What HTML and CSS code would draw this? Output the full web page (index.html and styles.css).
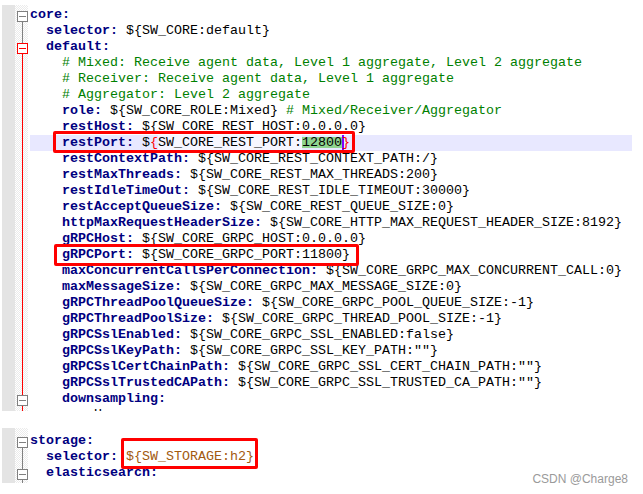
FILE: index.html
```html
<!DOCTYPE html>
<html lang="en">
<head>
  <meta charset="UTF-8">
  <meta name="viewport" content="width=device-width, initial-scale=1.0">
  <link rel="stylesheet" href="styles.css">
</head>
<body>

  <div class="editor top">
    <div class="margin"></div>
    <div class="folds">
      <span class="fold f-open"><i class="box"></i></span>
      <span class="fold f-g"></span>
      <span class="fold f-split"><i class="box red"></i></span>
      <span class="fold f-r"></span>
      <span class="fold f-r"></span>
      <span class="fold f-r"></span>
      <span class="fold f-r"></span>
      <span class="fold f-r"></span>
      <span class="fold f-r"></span>
      <span class="fold f-r"></span>
      <span class="fold f-r"></span>
      <span class="fold f-r"></span>
      <span class="fold f-r"></span>
      <span class="fold f-r"></span>
      <span class="fold f-r"></span>
      <span class="fold f-r"></span>
      <span class="fold f-r"></span>
      <span class="fold f-r"></span>
      <span class="fold f-r"></span>
      <span class="fold f-r"></span>
      <span class="fold f-r"></span>
      <span class="fold f-r"></span>
      <span class="fold f-r"></span>
      <span class="fold f-r"></span>
      <span class="fold f-r"><i class="box"></i></span>
      <span class="fold f-r"></span>
    </div>
    <div class="code">
<div class="ln"><span class="k">core:</span></div>
<div class="ln">  <span class="k">selector:</span> ${SW_CORE:default}</div>
<div class="ln">  <span class="k">default:</span></div>
<div class="ln">    <span class="c"># Mixed: Receive agent data, Level 1 aggregate, Level 2 aggregate</span></div>
<div class="ln">    <span class="c"># Receiver: Receive agent data, Level 1 aggregate</span></div>
<div class="ln">    <span class="c"># Aggregator: Level 2 aggregate</span></div>
<div class="ln">    <span class="k">role:</span> ${SW_CORE_ROLE:Mixed} <span class="c"># Mixed/Receiver/Aggregator</span></div>
<div class="ln">    <span class="k">restHost:</span> ${SW_CORE_REST_HOST:0.0.0.0}</div>
<div class="ln cur">    <span class="k">restPort:</span> $<span class="br">{</span><span class="match">SW_CORE_REST_PORT:</span><span class="sel">12800</span><span class="br caret">}</span></div>
<div class="ln">    <span class="k">restContextPath:</span> ${SW_CORE_REST_CONTEXT_PATH:/}</div>
<div class="ln">    <span class="k">restMaxThreads:</span> ${SW_CORE_REST_MAX_THREADS:200}</div>
<div class="ln">    <span class="k">restIdleTimeOut:</span> ${SW_CORE_REST_IDLE_TIMEOUT:30000}</div>
<div class="ln">    <span class="k">restAcceptQueueSize:</span> ${SW_CORE_REST_QUEUE_SIZE:0}</div>
<div class="ln">    <span class="k">httpMaxRequestHeaderSize:</span> ${SW_CORE_HTTP_MAX_REQUEST_HEADER_SIZE:8192}</div>
<div class="ln">    <span class="k">gRPCHost:</span> ${SW_CORE_GRPC_HOST:0.0.0.0}</div>
<div class="ln">    <span class="k">gRPCPort:</span> ${SW_CORE_GRPC_PORT:11800}</div>
<div class="ln">    <span class="k">maxConcurrentCallsPerConnection:</span> ${SW_CORE_GRPC_MAX_CONCURRENT_CALL:0}</div>
<div class="ln">    <span class="k">maxMessageSize:</span> ${SW_CORE_GRPC_MAX_MESSAGE_SIZE:0}</div>
<div class="ln">    <span class="k">gRPCThreadPoolQueueSize:</span> ${SW_CORE_GRPC_POOL_QUEUE_SIZE:-1}</div>
<div class="ln">    <span class="k">gRPCThreadPoolSize:</span> ${SW_CORE_GRPC_THREAD_POOL_SIZE:-1}</div>
<div class="ln">    <span class="k">gRPCSslEnabled:</span> ${SW_CORE_GRPC_SSL_ENABLED:false}</div>
<div class="ln">    <span class="k">gRPCSslKeyPath:</span> ${SW_CORE_GRPC_SSL_KEY_PATH:""}</div>
<div class="ln">    <span class="k">gRPCSslCertChainPath:</span> ${SW_CORE_GRPC_SSL_CERT_CHAIN_PATH:""}</div>
<div class="ln">    <span class="k">gRPCSslTrustedCAPath:</span> ${SW_CORE_GRPC_SSL_TRUSTED_CA_PATH:""}</div>
<div class="ln">    <span class="k">downsampling:</span></div>
<div class="ln">      - Hour</div>
    </div>
  </div>

  <div class="editor bottom">
    <div class="margin"></div>
    <div class="folds">
      <span class="fold f-open"><i class="box"></i></span>
      <span class="fold f-g"></span>
      <span class="fold f-g"><i class="box"></i></span>
      <span class="fold f-g"></span>
    </div>
    <div class="code">
<div class="ln"><span class="k">storage:</span></div>
<div class="ln">  <span class="k">selector:</span> <span class="env">${SW_STORAGE:h2}</span></div>
<div class="ln">  <span class="k">elasticsearch:</span></div>
<div class="ln">    <span class="k">nameSpace:</span> ${SW_NAMESPACE:""}</div>
    </div>
  </div>

  <!-- red annotation frames drawn over the screenshot -->
  <div class="mark mark-rest"></div>
  <div class="mark mark-grpc"></div>
  <div class="mark mark-storage"></div>

  <div class="watermark">CSDN @Charge8</div>

</body>
</html>
```

FILE: styles.css
```css
body {
  margin: 0;
  padding: 5px 0 0 2px;
  background-color: #fff;
  font-family: 'Liberation Mono', 'Courier New', monospace;
  font-size: 13.33px;
  color: #000;
  position: relative;
  min-height: 489px;
}

.editor {
  display: flex;
  width: 630px;
  overflow: hidden;
  background-color: #fff;
}

.editor.top {
  height: 406px;
}

.editor.bottom {
  height: 55px;
  margin-top: 17px;
}

.margin {
  width: 13px;
  flex-shrink: 0;
  background-color: #e4e4e4;
}

/* fold margin: checkered like Notepad++ */
.folds {
  width: 13px;
  flex-shrink: 0;
  background: repeating-conic-gradient(#ebebeb 0 25%, #fff 0 50%) 0 0 / 2px 2px;
}

.top .folds,
.top .code {
  padding-top: 2px;
}

.bottom .folds,
.bottom .code {
  padding-top: 5px;
}

.fold {
  display: flex;
  height: 16px;
  background-repeat: no-repeat;
}

.f-g {
  background-image: linear-gradient(#808080, #808080);
  background-position: 7px 0;
  background-size: 1px 100%;
}

.f-r {
  background-image: linear-gradient(#ff0000, #ff0000);
  background-position: 7px 0;
  background-size: 1px 100%;
}

.f-open {
  background-image: linear-gradient(#808080, #808080);
  background-position: 7px 100%;
  background-size: 1px 50%;
}

.f-split {
  background-image: linear-gradient(#808080, #808080), linear-gradient(#ff0000, #ff0000);
  background-position: 7px 0, 7px 100%;
  background-size: 1px 50%, 1px 50%;
}

.box {
  display: block;
  width: 9px;
  height: 9px;
  margin: 4px 0 0 2px;
  border: 1px solid #808080;
  background: linear-gradient(#808080, #808080) center / 7px 1px no-repeat #fff;
}

.box.red {
  border-color: #ff0000;
  background: linear-gradient(#ff0000, #ff0000) center / 7px 1px no-repeat #fff;
}

.code {
  flex: 1;
  margin-left: 2px;
}

.ln {
  height: 16px;
  line-height: 16px;
  white-space: pre;
}

.ln.cur {
  background-color: #e8e8ff;
}

.k {
  color: #000080;
  font-weight: bold;
}

.c {
  color: #008000;
}

.env {
  color: #a25a10;
}

.br {
  color: #ff0000;
}

.match {
  background-color: #f6f6ff;
}

.sel {
  background: linear-gradient(#8fd48f, #8fd48f) 0 2px / 100% 11px no-repeat;
}

.caret {
  box-shadow: inset 2px 0 #8000ff;
}

.mark {
  position: absolute;
  box-sizing: border-box;
  border: 3px solid #ff0000;
  border-radius: 2px;
}

.mark-rest {
  left: 53px;
  top: 131px;
  width: 302px;
  height: 22px;
}

.mark-grpc {
  left: 54px;
  top: 244px;
  width: 305px;
  height: 22px;
}

.mark-storage {
  left: 121px;
  top: 438px;
  width: 137px;
  height: 31px;
}

.watermark {
  position: absolute;
  top: 472px;
  right: 15px;
  font-family: 'Liberation Sans', Arial, sans-serif;
  font-size: 12px;
  line-height: 14px;
  color: #9a9a9a;
}
```
